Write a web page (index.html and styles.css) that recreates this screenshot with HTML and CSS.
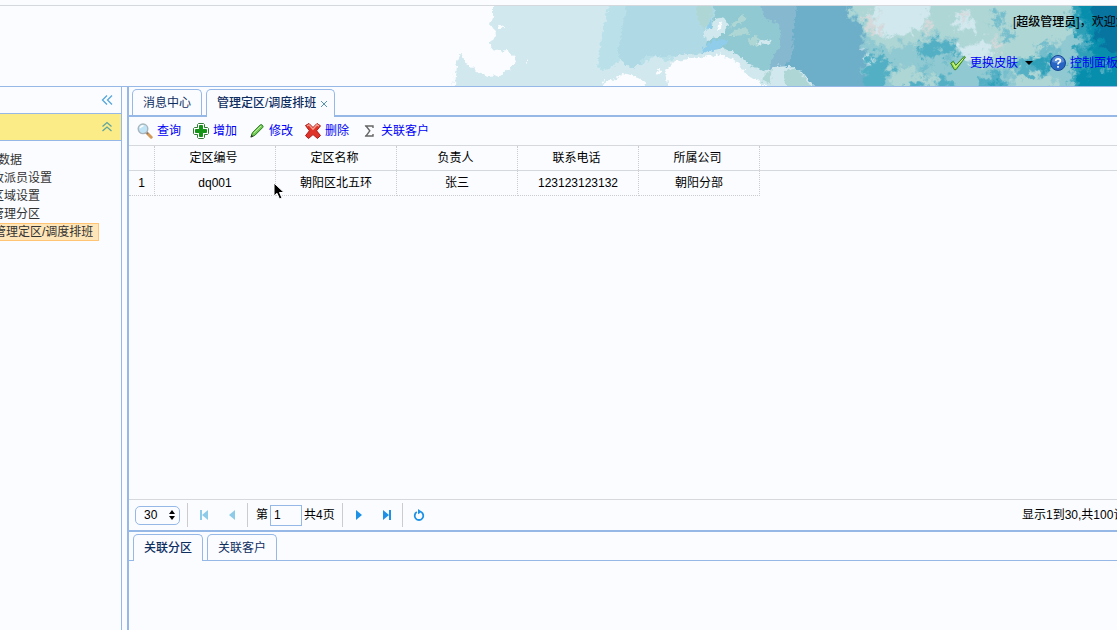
FILE: index.html
```html
<!DOCTYPE html>
<html lang="zh-CN">
<head>
<meta charset="utf-8">
<title>管理定区/调度排班</title>
<link rel="stylesheet" href="styles.css">
</head>
<body>
<div class="app">
  <header class="banner">
    <svg class="sky" viewBox="0 0 677 80" preserveAspectRatio="xMaxYMin slice" aria-hidden="true">
      <defs>
        <filter id="rough" x="-5%" y="-10%" width="110%" height="120%" color-interpolation-filters="sRGB">
          <feGaussianBlur in="SourceGraphic" stdDeviation="1.6" result="b"/>
          <feTurbulence type="fractalNoise" baseFrequency="0.13" numOctaves="5" seed="4" result="n"/>
          <feDisplacementMap in="b" in2="n" scale="24" xChannelSelector="R" yChannelSelector="G"/>
        </filter>
        <filter id="fray" x="-5%" y="-10%" width="110%" height="120%" color-interpolation-filters="sRGB">
          <feTurbulence type="fractalNoise" baseFrequency="0.25" numOctaves="3" seed="9" result="n"/>
          <feDisplacementMap in="SourceGraphic" in2="n" scale="7" xChannelSelector="R" yChannelSelector="G"/>
        </filter>
      </defs>
      <g filter="url(#fray)">
        <path fill="#d0e8ee" d="M53-9V11L50 18L56 27L49 39L54 45L67 44L77 54L70 63L60 69L48 70L39 67L32 62L26 58L21 48L16 57L10 90H700V-9Z"/>
        <path fill="#fafcff" d="M15 57L17 59L14 90H11ZM57 19L62 18L63 22H58ZM86 53L88 52L86 58Z"/>
        <path fill="#bae1e9" d="M170-9L162 28L157 62L170 65L200 58L270 50V-9Z"/>
        <path fill="#aed9e5" d="M188-9L178 45L180 55L192 64L206 50H290V-9Z"/>
        <path fill="#d0e8ee" d="M155 70L170 62L181 54L194 64L203 58L215 49L225 55L232 80H158Z"/>
        <path fill="#90c9d1" d="M272-9L275 5L271 22L262 48L285 50L306 60L318 72L330 66L350 61V-9Z"/>
        <path fill="#aed6d5" d="M255-9H275L271 11L264 24L258 13Z"/>
        <path fill="#8fcdeb" d="M265 40L277 33L290 34L281 41L270 47L260 48ZM267 18L272 12L270 27Z"/>
        <path fill="#86b8d0" d="M319-9L325 14L339 16L341 39L333 49L328 63L350 68H380V-9Z"/>
        <path fill="#6daec8" d="M359-9L353 23L352 50L342 64L360 66L370 80L395 90H470V-9Z"/>
      </g>
      <g filter="url(#fray)">
        <path fill="#d0e8ee" d="M263 31L266 24L272 22L275 13L283 11L288 18L285 26L278 31L269 35Z"/>
        <path fill="#aed6d5" d="M288 23L294 17L302 8L308 13L296 20ZM288 30L294 24L306 22L311 26L306 29L294 30ZM307 34L316 30L321 38L313 41Z"/>
        <path fill="#d0e8ee" d="M317 38L321 33L332 34L326 39Z"/>
        <path fill="#fafcff" d="M278 20L282 15L281 22L277 26Z"/>
        <path fill="#d0e8ee" d="M215 75L219 60L236 50L257 48L283 42L298 49L309 58L324 66L333 61L351 60L361 65L370 76L384 90H211Z"/>
        <path fill="#fafcff" d="M225 65L235 55L257 52L280 48L292 53L302 61L307 70L320 75L333 90H231ZM162 76L175 73L184 67L197 71L207 76L203 84H164ZM216 64L220 63L222 67L217 69Z"/>
        <path fill="#aed6d5" d="M325 68L332 63L329 78L322 74ZM344 64L358 63L365 73L372 84H347Z"/>
      </g>
      <g filter="url(#rough)">
        <path fill="#90c9d1" d="M410-19L410 12L421 19L423 35L427 51L423 68L434 100H710V-19Z"/>
        <path fill="#aed6d5" d="M413-19L412 7L423 20L427 32L438 42L453 42L465 36L477 40L483 31L495 28L512 32L524 42L537 45L548 58L565 64L580 62L590 58L608 48L615 40L628 29L637-19Z"/>
        <path fill="#d0e8ee" d="M431-19L434 8L438 26L449 32L464 28L480 24L489 8L491-19ZM516 6L528 5L535 18L525 28L515 20ZM519 43L547 35L553 49L540 57L522 54ZM424 50L430 47L434 60L426 57Z"/>
        <path fill="#d6d8d9" d="M421 10L434 9L439 26L433 27ZM483 23L490 13L494 20L487 28ZM519 5L528 9L525 17L520 12ZM550 33L563 38L566 45L555 43Z"/>
        <path fill="#52afc4" d="M477 48L481 37L494 33L509 35L518 44L513 50L500 47L489 54ZM430 48L445 52L452 59L446 71L435 94H420L425 69Z"/>
        <path fill="#74bdcc" d="M484 58L491 57L489 72L479 68ZM507 51L513 52L510 60L503 56ZM550 9L562 4L565 18L557 20ZM559 32L571 23L576 30L567 36ZM592 39L611 36L619 45L605 50ZM565 60L582 55L600 65L593 76H573Z"/>
        <path fill="#aed6d5" d="M450 65L468 60L484 72L496 66L491 94H452ZM573 69L593 66L614 72L616 94H572Z"/>
        <path fill="#52afc4" d="M470 76L484 77L481 90L467 86ZM542 72L557 65L568 73L562 90H538ZM496 68L512 73L516 90H501ZM575 60L588 50L602 53L613 61L607 69L593 66L584 70Z"/>
        <path fill="#2da0b8" d="M591 54L603 47L613 54L615 62L604 61L597 65ZM634-19L636 16L630 22L641 33L635 48L628 54L634 67L628 100H710V-19ZM550 76L557 72L560 79L554 83Z"/>
        <path fill="#078ead" d="M643-19L641 14L650 20L646 31L654 40L648 51L654 58L638 66L641 100H710V-19Z"/>
        <path fill="#0874a0" d="M652-19L650 9L658 18L656 29L665 42L675 46L710 50V-19Z"/>
        <path fill="#52afc4" d="M638 38L647 31L654 38L646 46ZM625 10L632 9L636 19L628 20ZM662 59L670 56L674 62L665 65Z"/>
        <path fill="#90c9d1" d="M615 58L625 49L634 53L631 67L617 70ZM567 50L579 53L572 58L561 56Z"/>
      </g>
    </svg>
    <div class="welcome">[<strong>超级管理员</strong>]，欢迎您！</div>
    <nav class="user-menu">
      <button class="link-btn" type="button">
        <svg class="icon" viewBox="0 0 16 16"><path d="M.7 8.2L3.3 6.3L5.8 10.3L14.4 1.2L15.4 2L6 14.7H4.4Z" fill="#9fe052" stroke="#357d25"/><path d="M3 8L5.4 12.2L13 4" fill="none" stroke="#d7f98f"/></svg>
        更换皮肤
        <svg class="caret" viewBox="0 0 8 4"><path d="M0 0H8L4 4Z"/></svg>
      </button>
      <button class="link-btn" type="button">
        <svg class="icon" viewBox="0 0 16 16"><circle cx="8" cy="8" r="7.5" fill="#2864c4" stroke="#174691"/><path d="M2 7A6 6 0 0 1 14 7Q8 9 2 7" fill="#5b8cd8"/><path d="M5.7 6Q5.8 3.8 8 3.8Q10.4 3.8 10.4 5.8Q10.4 7 8.9 7.8Q8 8.4 8 9.6M8 11V12.7" fill="none" stroke="#fff" stroke-width="1.7"/></svg>
        控制面板
      </button>
    </nav>
  </header>

  <div class="body">
    <aside class="sidebar">
      <div class="side-head">
        <button class="tool-btn" type="button" aria-label="收起菜单"><svg viewBox="0 0 12 12"><path d="M6 1.5L1.5 6L6 10.5M11 1.5L6.5 6L11 10.5"/></svg></button>
      </div>
      <div class="side-head side-active">
        <button class="tool-btn" type="button" aria-label="折叠"><svg viewBox="0 0 12 12"><path d="M1.5 5.5L6 1.5L10.5 5.5M1.5 10L6 6L10.5 10"/></svg></button>
      </div>
      <ul class="tree">
        <li class="root"><a href="#">基础数据</a></li>
        <li><a href="#">收派员设置</a></li>
        <li><a href="#">区域设置</a></li>
        <li><a href="#">管理分区</a></li>
        <li class="selected"><a href="#">管理定区/调度排班</a></li>
      </ul>
    </aside>

    <main class="main">
      <div class="tabs">
        <button class="tab" type="button">消息中心</button>
        <button class="tab active" type="button">管理定区/调度排班<svg class="close" viewBox="0 0 8 8"><path d="M1 1L7 7M7 1L1 7"/></svg></button>
      </div>
      <div class="toolbar">
        <button class="link-btn" type="button"><svg class="icon" viewBox="0 0 16 16"><path d="M9.5 9.5L14.2 14.2" stroke="#d59a58" stroke-width="3" stroke-linecap="round"/><path d="M9.3 9.3L11 11" stroke="#777" stroke-width="1.5"/><circle cx="6" cy="5.8" r="4.8" fill="#bfe4f5" stroke="#a9b5bc" stroke-width="1.4"/><path d="M3.2 5Q4 2.7 6.5 2.8" fill="none" stroke="#fff" stroke-width="1.5"/></svg>查询</button>
        <button class="link-btn" type="button"><svg class="icon" viewBox="0 0 16 16"><path d="M5.5 .5H10.5L11.5 1.5V4.5H14.5L15.5 5.5V10.5L14.5 11.5H11.5V14.5L10.5 15.5H5.5L4.5 14.5V11.5H1.5L.5 10.5V5.5L1.5 4.5H4.5V1.5Z" fill="#fff" stroke="#317b35"/><path d="M6.5 2.5H9.5V6.5H13.5V9.5H9.5V13.5H6.5V9.5H2.5V6.5H6.5Z" fill="#149414" stroke="#149414"/></svg>增加</button>
        <button class="link-btn" type="button"><svg class="icon" viewBox="0 0 16 16"><path d="M2 14L3.3 9.8L11.2 2Q12.2 1 13.4 2.2Q14.6 3.4 13.7 4.5L5.8 12.4Z" fill="#75cb55" stroke="#267a20"/><path d="M4.8 10L12 3" stroke="#c4f1a3"/><path d="M1.5 14.5L2.4 11.5L4.4 13.5Z" fill="#333"/></svg>修改</button>
        <button class="link-btn" type="button"><svg class="icon" viewBox="0 0 16 16"><path d="M.5 2.5L4 .5L8 4.5L12 .5L15.5 2.8L11.6 7.8L15.5 12.5L12.5 15.5L8 11.6L3.5 15.5L.5 12.7L4.4 7.8Z" fill="#df3228" stroke="#a91b18"/><path d="M2 2.8L4 1.8L8 6.2L12 1.8L14 3" fill="none" stroke="#f49b8c" stroke-width="1.5"/></svg>删除</button>
        <button class="link-btn" type="button"><svg class="icon" viewBox="0 0 16 16"><path d="M12 5V3H5L8.8 7.8L5 13H12V11M4 3H8M4 13H8" fill="none" stroke="#666" stroke-width="1.4"/></svg>关联客户</button>
      </div>
      <section class="grid">
        <table>
          <thead><tr><th class="num"></th><th>定区编号</th><th>定区名称</th><th>负责人</th><th>联系电话</th><th>所属公司</th></tr></thead>
          <tbody><tr><td class="num">1</td><td>dq001</td><td>朝阳区北五环</td><td>张三</td><td>123123123132</td><td>朝阳分部</td></tr></tbody>
        </table>
        <svg class="cursor" viewBox="0 0 12 18"><path d="M1 1V14L4 11.3L6.5 17L9 16L6.5 10.5H11Z" fill="#000" stroke="#fff"/></svg>
      </section>
      <div class="pager">
        <span class="page-size">
          <select aria-label="每页条数"><option>30</option></select>
          <svg viewBox="0 0 6 10"><path d="M0 4L3 0L6 4ZM0 6H6L3 10Z"/></svg>
        </span>
        <i class="sep"></i>
        <button class="page-btn off" type="button" aria-label="首页"><svg viewBox="0 0 12 12"><path d="M2 1H4V11H2ZM10 1V11L4 6Z"/></svg></button>
        <button class="page-btn off" type="button" aria-label="上一页"><svg viewBox="0 0 12 12"><path d="M9 1V11L3 6Z"/></svg></button>
        <i class="sep"></i>
        <label class="page-no">第<input type="text" value="1">共4页</label>
        <i class="sep"></i>
        <button class="page-btn" type="button" aria-label="下一页"><svg viewBox="0 0 12 12"><path d="M3 1V11L9 6Z"/></svg></button>
        <button class="page-btn" type="button" aria-label="末页"><svg viewBox="0 0 12 12"><path d="M2 1V11L8 6ZM8 1H10V11H8Z"/></svg></button>
        <i class="sep"></i>
        <button class="page-btn" type="button" aria-label="刷新"><svg viewBox="0 0 12 12"><path d="M8.2 3A4.3 4.3 0 1 1 3.8 3" fill="none" stroke="#1c91e6" stroke-width="1.8"/><path d="M5 0L9 2.8L5 5.2Z"/></svg></button>
        <span class="summary">显示1到30,共100记录</span>
      </div>
      <section class="detail">
        <div class="tabs sub-tabs">
          <button class="tab active" type="button">关联分区</button>
          <button class="tab" type="button">关联客户</button>
        </div>
      </section>
    </main>
  </div>
</div>
</body>
</html>
```
FILE: styles.css
```css
* { box-sizing: border-box; }
body {
  margin: 0;
  background: #fafcff;
  color: #000;
  font: 12px/18px "Liberation Sans", "Noto Sans CJK SC", sans-serif;
}
button, input, select { font: inherit; color: inherit; }
button { border: 0; padding: 0; background: none; white-space: nowrap; }
a { color: inherit; text-decoration: none; }
svg { display: block; flex: none; }

.app { display: flex; flex-direction: column; height: 100vh; padding-top: 5px; overflow: hidden; }

.banner {
  position: relative;
  flex: none;
  display: flex;
  flex-direction: column;
  align-items: flex-end;
  gap: 22px;
  height: 82px;
  padding-top: 7px;
  border-top: 1px solid #d5d8dc;
  border-bottom: 1px solid #95b8e7;
  overflow: hidden;
}
.sky { position: absolute; top: 0; right: 0; width: 677px; height: 80px; }
.welcome { position: relative; width: 104px; white-space: nowrap; }
.welcome strong { font-weight: 500; }
.user-menu { position: relative; display: flex; gap: 17px; width: 167px; }

.link-btn { display: flex; align-items: center; gap: 4px; color: #0000f5; line-height: 20px; }
.icon { width: 16px; height: 16px; }
.caret { width: 8px; height: 4px; margin-left: 3px; }

.body { flex: 1; display: flex; gap: 5px; min-height: 0; }

.sidebar { flex: none; width: 122px; border-right: 1px solid #95b8e7; overflow: hidden; }
.side-head {
  display: flex;
  align-items: center;
  justify-content: flex-end;
  height: 27px;
  padding-right: 8px;
  border-bottom: 1px solid #95b8e7;
}
.side-active { background: #fbec88; }
.tool-btn svg { width: 12px; height: 12px; fill: none; stroke: #55a5dc; stroke-width: 1.3; }
.side-active svg { stroke: #5fa59f; }
.tree { list-style: none; margin: 10px 0 0 -8px; padding: 0; color: #333; white-space: nowrap; }
.tree li { width: max-content; height: 18px; }
.tree .root { margin-left: -18px; }
.tree .selected { padding: 0 5px 0 1px; background: #ffe6b8; border: 1px solid #ffc574; line-height: 16px; }

.main { flex: 1; display: flex; flex-direction: column; min-width: 0; border-left: 2px solid #95b8e7; }
.tabs {
  flex: none;
  display: flex;
  align-items: flex-end;
  gap: 4px;
  height: 30px;
  padding-left: 3px;
  border-bottom: 2px solid #95b8e7;
}
.tab {
  display: flex;
  align-items: center;
  height: 26px;
  padding: 0 10px;
  border: 1px solid #95b8e7;
  border-bottom: 0;
  border-radius: 5px 5px 0 0;
  background: #fafcff;
  color: #0e2d5f;
}
.tab.active { height: 28px; margin-bottom: -2px; padding-bottom: 2px; font-weight: 500; }
.close { width: 8px; height: 8px; margin: 3px -4px 0 4px; stroke: #5a93b0; fill: none; }

.toolbar {
  flex: none;
  display: flex;
  align-items: center;
  gap: 12px;
  height: 29px;
  padding-left: 8px;
  border-bottom: 1px solid #d5d8dc;
}

.grid { position: relative; flex: 1; min-height: 0; }
table { display: block; }
thead, tbody, tr { display: flex; }
thead { border-bottom: 1px solid #d5d8dc; }
th, td {
  width: 121px;
  height: 24px;
  padding: 0 3px 0 0;
  border-right: 1px dotted #ccc;
  font-weight: 400;
  line-height: 24px;
  text-align: center;
}
td { height: 25px; padding: 0; border-bottom: 1px dotted #ccc; }
.num { width: 26px; }
.cursor { position: absolute; left: 144px; top: 36px; width: 12px; height: 18px; }

.pager {
  flex: none;
  display: flex;
  align-items: center;
  height: 31px;
  padding-left: 6px;
  border-top: 1px solid #d5d8dc;
  white-space: nowrap;
  overflow: hidden;
}
.page-size { display: grid; align-items: center; margin-right: 7px; }
.page-size > * { grid-area: 1 / 1; }
.page-size select {
  width: 45px;
  height: 19px;
  padding: 0 8px;
  border: 1px solid #95b8e7;
  border-radius: 5px;
  background: #fafcff;
  appearance: none;
  line-height: 16px;
}
.page-size svg { justify-self: end; width: 6px; height: 10px; margin-right: 5px; pointer-events: none; }
.sep { width: 1px; height: 24px; background: #ccc; }
.page-btn { padding: 0 8px; }
.page-btn svg { width: 12px; height: 12px; fill: #1c91e6; }
.page-btn.off svg { fill: #8ecbe8; }
.sep + .page-btn { margin-left: 2px; }
.page-btn + .sep { margin-left: 1px; }
.page-no { display: flex; align-items: center; padding: 0 7px 0 8px; }
.page-no input {
  width: 32px;
  height: 21px;
  margin: 0 2px;
  padding: 0 3px;
  border: 1px solid #95b8e7;
  background: #fafcff;
}
.summary { width: 95px; margin-left: auto; }

.detail { flex: none; height: 100px; border-top: 2px solid #95b8e7; }
.sub-tabs { height: 29px; padding-left: 4px; border-bottom-width: 1px; }
.sub-tabs .tab { height: 26px; }
.sub-tabs .tab.active { height: 27px; margin-bottom: -1px; padding-bottom: 1px; }
```
